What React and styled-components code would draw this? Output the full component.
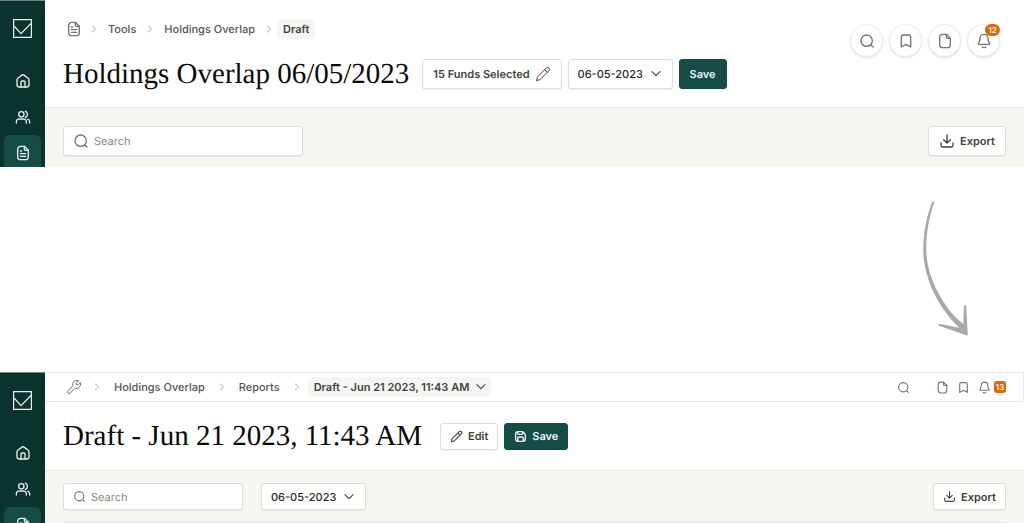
import React from "react"
import styled, { createGlobalStyle } from "styled-components"

const GlobalStyle = createGlobalStyle`
  * {
    box-sizing: border-box;
  }

  body {
    margin: 0;
    background-color: #fff;
    color: #44403c;
    font-family: Inter, "Liberation Sans", sans-serif;
    font-size: 11px;
    line-height: 16px;
    text-rendering: geometricPrecision;
  }

  button,
  input,
  select {
    font: inherit;
    color: inherit;
    text-rendering: inherit;
  }
`

const Screen = styled.section`
  display: grid;
  grid-template-columns: 45px 1fr;
`

const Main = styled.main`
  min-width: 0;
`

/* the rail is clipped to the height of the content beside it */
const Sidebar = styled.aside`
  contain: size;
  overflow: hidden;
  display: flex;
  flex-direction: column;
  align-items: center;
  padding-top: 18px;
  background-color: #0a332e;
  border-top: 1px solid #6c8582;
  color: #e7efed;
`

const HomeLink = styled.a`
  display: flex;
  margin-bottom: 25px;
  color: inherit;
`

const SideLink = styled.a`
  flex: none;
  display: flex;
  align-items: center;
  justify-content: center;
  width: 37px;
  height: 36px;
  border-radius: 6px;
  color: inherit;
  background-color: ${({ $active }) => ($active ? "#154c46" : "transparent")};
`

const Svg = styled.svg`
  flex: none;
  display: block;
  fill: none;
  stroke: currentColor;
  stroke-width: ${({ $weight }) => $weight || 2};
  stroke-linecap: round;
  stroke-linejoin: round;
`

const Header = styled.header`
  display: flex;
  justify-content: space-between;
  align-items: flex-start;
  padding: ${({ $compact }) => ($compact ? "20px 18px" : "19px 24px 18px 18px")};
  border-bottom: 1px solid #ecece8;
`

const NavBar = styled.div`
  display: flex;
  justify-content: space-between;
  align-items: center;
  height: 30px;
  padding: 0 17px 0 18px;
  border: 1px solid #e9e9e7;
  border-left: none;
`

const Crumbs = styled.nav`
  display: flex;
  align-items: center;
  color: #57534e;
  font-weight: 500;
`

const CrumbLink = styled.a`
  display: flex;
  color: inherit;
  text-decoration: none;
`

const CrumbIcon = styled(CrumbLink)`
  margin-right: -2px;
  padding-left: 3px;
  color: #78716c;
`

const Separator = styled.span`
  display: flex;
  padding: 0 ${({ $wide }) => ($wide ? "11px" : "8px")};
  color: #d0cecb;
`

const CrumbCurrent = styled.span`
  margin-left: -6px;
  padding: 2px 6px;
  border-radius: 4px;
  background-color: #f5f5f4;
  color: #44403c;
  font-weight: 600;
`

const TitleRow = styled.div`
  display: flex;
  align-items: center;
  margin-top: ${({ $compact }) => ($compact ? "0" : "20px")};
`

const Title = styled.h1`
  margin: 0 ${({ $compact }) => ($compact ? "18px" : "13px")} 0 0;
  color: #0c0a09;
  font-family: "Liberation Serif", serif;
  font-size: 29px;
  font-weight: 400;
  line-height: 28px;
  white-space: nowrap;
`

const ButtonRow = styled.div`
  display: flex;
  gap: 6px;
`

const Button = styled.button`
  display: flex;
  align-items: center;
  gap: 5px;
  height: ${({ $compact }) => ($compact ? "27px" : "30px")};
  padding: 0 ${({ $compact }) => ($compact ? "9px" : "10px")};
  border: 1px solid ${({ $primary }) => ($primary ? "#154c46" : "#dedcda")};
  border-radius: 3px;
  background-color: ${({ $primary }) => ($primary ? "#154c46" : "#fff")};
  color: ${({ $primary }) => ($primary ? "#edf5f3" : "#44403c")};
  box-shadow: 0 1px 1px rgba(28, 25, 23, 0.06);
  font-weight: 600;
  white-space: nowrap;
`

const SelectWrapper = styled.div`
  position: relative;
  display: flex;
  color: #57534e;

  svg {
    position: absolute;
    right: ${({ $chip }) => ($chip ? "3px" : "10px")};
    top: 50%;
    transform: translateY(-50%);
    pointer-events: none;
  }
`

const DateSelect = styled.select`
  appearance: none;
  height: ${({ $compact }) => ($compact ? "27px" : "30px")};
  padding: 0 28px 0 9px;
  border: 1px solid #dedcda;
  border-radius: 3px;
  background-color: #fff;
  color: #292524;
  box-shadow: 0 1px 1px rgba(28, 25, 23, 0.06);
  font-weight: 500;
`

const CrumbSelect = styled.select`
  appearance: none;
  height: 20px;
  margin-left: -6px;
  padding: 0 21px 0 6px;
  border: none;
  border-radius: 4px;
  background-color: #f5f5f4;
  color: #44403c;
  font-weight: 600;
`

const Actions = styled.div`
  display: flex;
  gap: 6px;
  padding-top: 5px;
`

const RoundButton = styled.button`
  position: relative;
  display: flex;
  align-items: center;
  justify-content: center;
  width: 33px;
  height: 33px;
  padding: 0;
  border: 1px solid #efeeed;
  border-radius: 50%;
  background-color: #fff;
  color: #78716c;
  box-shadow: 0 1px 2px rgba(28, 25, 23, 0.14);
`

const CountBadge = styled.span`
  position: absolute;
  top: -1px;
  right: -1px;
  min-width: 15px;
  border-radius: 6px;
  background-color: #d96a0b;
  color: #fff;
  font-size: 8px;
  font-weight: 500;
  line-height: 12px;
  text-align: center;
`

const FlatActions = styled.div`
  display: flex;
  align-items: center;
  gap: 8px;
`

const FlatButton = styled.button`
  display: flex;
  align-items: center;
  gap: 3px;
  padding: 0;
  border: none;
  background: none;
  color: #78716c;
  margin-right: ${({ $spaced }) => ($spaced ? "18px" : "0")};
`

const CountTag = styled.span`
  min-width: 12px;
  border-radius: 3px;
  background-color: #d96a0b;
  color: #fff;
  font-size: 8px;
  font-weight: 500;
  line-height: 12px;
  text-align: center;
`

const Toolbar = styled.div`
  display: flex;
  justify-content: space-between;
  align-items: center;
  padding: ${({ $compact }) => ($compact ? "12px 18px" : "18px 18px 11px")};
  background-color: #f5f6f0;
`

const Filters = styled.div`
  display: flex;
  gap: 18px;
`

const SearchBox = styled.label`
  display: flex;
  align-items: center;
  gap: 5px;
  width: ${({ $compact }) => ($compact ? "180px" : "240px")};
  height: ${({ $compact }) => ($compact ? "27px" : "30px")};
  padding: 0 9px;
  border: 1px solid #dedcda;
  border-radius: 3px;
  background-color: #fff;
  color: #78716c;
  box-shadow: 0 1px 1px rgba(28, 25, 23, 0.06);
`

const SearchInput = styled.input`
  flex: 1;
  min-width: 0;
  padding: 0;
  border: none;
  outline: none;
  background: none;

  &::placeholder {
    color: #8a8580;
    opacity: 1;
  }
`

const TableEdge = styled.div`
  height: 1px;
  background-color: #e4e4e0;
  border-left: 18px solid #f5f6f0;
  border-right: 18px solid #f5f6f0;
`

const Transition = styled.div`
  display: flex;
  justify-content: flex-end;
  padding: 34px 56px 35px 0;
`

const paths = {
  home: [
    "M9 21v-7.4c0-.9.7-1.6 1.6-1.6h2.8c.9 0 1.6.7 1.6 1.6V21",
    "M11 2.8 4.2 8C3.4 8.7 3 9.4 3 10.4v7.4C3 20 4 21 6.2 21h11.6c2.2 0 3.2-1 3.2-3.2v-7.4c0-1-.4-1.7-1.2-2.4L13 2.8c-.7-.5-1.3-.5-2 0Z",
  ],
  users: [
    "M22 21v-2c0-1.9-1.3-3.4-3-3.9M15.5 3.3a5 5 0 0 1 0 9.3M17 21c0-1.9 0-2.8-.3-3.5a4 4 0 0 0-2.2-2.2C13.8 15 12.9 15 11 15H8c-1.9 0-2.8 0-3.5.3a4 4 0 0 0-2.2 2.2C2 18.2 2 19.1 2 21M13.5 8a4 4 0 1 1-8 0 4 4 0 0 1 8 0Z",
  ],
  report: [
    "M14 2.3v4.1c0 .9.7 1.6 1.6 1.6h4.1M16 13H8M16 17H8M10 9H8",
    "M14 2H8.8C5.3 2 4 3.3 4 6.8v10.4C4 20.7 5.3 22 8.8 22h6.4c3.5 0 4.8-1.3 4.8-4.8V8Z",
  ],
  file: [
    "M14 2.3v4.1c0 .9.7 1.6 1.6 1.6h4.1",
    "M14 2H8.8C5.3 2 4 3.3 4 6.8v10.4C4 20.7 5.3 22 8.8 22h6.4c3.5 0 4.8-1.3 4.8-4.8V8Z",
  ],
  bookmark: ["M5 5.5C5 4 5.8 3 7.5 3h9C18.2 3 19 4 19 5.5V21l-7-4-7 4Z"],
  search: ["m21 21-3.5-3.5M20 11.5a8.5 8.5 0 1 1-17 0 8.5 8.5 0 0 1 17 0Z"],
  bell: [
    "M9.4 21c.7.6 1.6 1 2.6 1s1.9-.4 2.6-1",
    "M18 8A6 6 0 1 0 6 8c0 3.1-.8 5.2-1.7 6.6-.7 1.2-1.1 1.7-1 2 .1.3.6.4 1.6.4h14.2c1 0 1.5-.1 1.6-.4.1-.3-.3-.8-1-2C18.8 13.2 18 11.1 18 8Z",
  ],
  download: [
    "M21 15v1.2c0 1.7 0 2.5-.3 3.2a3 3 0 0 1-1.3 1.3c-.7.3-1.5.3-3.2.3H7.8c-1.7 0-2.5 0-3.2-.3a3 3 0 0 1-1.3-1.3C3 18.7 3 17.9 3 16.2V15M17 10l-5 5-5-5M12 15V3",
  ],
  pencil: [
    "m2.5 21.5.9-4.3c.1-.6.3-.9.6-1.2L17 3a2.8 2.8 0 0 1 4 4L8 20c-.3.3-.6.5-1.2.6ZM14.5 5.5l4 4",
  ],
  chevronRight: ["m9 18 6-6-6-6"],
  chevronDown: ["m5 8 7 7 7-7"],
  wrench: [
    "M15.6 8.4a2 2 0 0 1 0-2.8l3-3A6.5 6.5 0 0 0 9.9 10c.1.4 0 .8-.3 1.1L3 17.6A2.4 2.4 0 0 0 6.4 21l6.5-6.6c.3-.3.7-.4 1.1-.3a6.5 6.5 0 0 0 7.4-8.7l-3 3a2 2 0 0 1-2.8 0Z",
  ],
  save: [
    "M7 3v3.4C7 7.3 7.7 8 8.6 8h5.8c.9 0 1.6-.7 1.6-1.6V4M17 21v-6.4c0-.9-.7-1.6-1.6-1.6H8.6c-.9 0-1.6.7-1.6 1.6V21",
    "M21 9.3v6.9c0 3.4-1.4 4.8-4.8 4.8H7.8C4.4 21 3 19.6 3 16.2V7.8C3 4.4 4.4 3 7.8 3h6.9c1 0 1.7.3 2.4 1l2.9 2.9c.7.7 1 1.4 1 2.4Z",
  ],
}

const Icon = ({ name, size = 16, weight }) => (
  <Svg width={size} height={size} viewBox="0 0 24 24" $weight={weight} aria-hidden="true">
    {paths[name].map(d => (
      <path key={d} d={d} />
    ))}
  </Svg>
)

const Logo = () => (
  <svg width="19" height="19" viewBox="0 0 19 19" fill="none" stroke="currentColor" strokeWidth="1.2">
    <path d="M.6.6h17.8v17.8H.6ZM.6 6.5l7.4 8.2L18.4 4" />
  </svg>
)

const Rail = () => (
  <Sidebar>
    <HomeLink href="#" aria-label="Dashboard">
      <Logo />
    </HomeLink>
    <SideLink href="#home" aria-label="Home">
      <Icon name="home" />
    </SideLink>
    <SideLink href="#clients" aria-label="Clients">
      <Icon name="users" />
    </SideLink>
    <SideLink href="#reports" aria-label="Reports" $active>
      <Icon name="report" />
    </SideLink>
  </Sidebar>
)

const Divider = ({ wide }) => (
  <Separator $wide={wide}>
    <Icon name="chevronRight" size={12} weight={2.5} />
  </Separator>
)

const DatePicker = ({ compact }) => (
  <SelectWrapper>
    <DateSelect $compact={compact} aria-label="Date" defaultValue="06-05-2023">
      <option>06-05-2023</option>
    </DateSelect>
    <Icon name="chevronDown" size={14} />
  </SelectWrapper>
)

const Search = ({ compact }) => (
  <SearchBox $compact={compact}>
    <Icon name="search" size={compact ? 13 : 16} />
    <SearchInput type="text" placeholder="Search" aria-label="Search" />
  </SearchBox>
)

const OverlapScreen = () => (
  <Screen>
    <Rail />
    <Main>
      <Header>
        <div>
          <Crumbs aria-label="Breadcrumb">
            <CrumbIcon href="#reports" aria-label="Reports">
              <Icon name="report" />
            </CrumbIcon>
            <Divider />
            <CrumbLink href="#tools">Tools</CrumbLink>
            <Divider />
            <CrumbLink href="#overlap">Holdings Overlap</CrumbLink>
            <Divider />
            <CrumbCurrent>Draft</CrumbCurrent>
          </Crumbs>
          <TitleRow>
            <Title>Holdings Overlap 06/05/2023</Title>
            <ButtonRow>
              <Button>
                15 Funds Selected
                <Icon name="pencil" weight={1.5} />
              </Button>
              <DatePicker />
              <Button $primary>Save</Button>
            </ButtonRow>
          </TitleRow>
        </div>
        <Actions>
          <RoundButton aria-label="Search">
            <Icon name="search" />
          </RoundButton>
          <RoundButton aria-label="Bookmarks">
            <Icon name="bookmark" />
          </RoundButton>
          <RoundButton aria-label="Files">
            <Icon name="file" />
          </RoundButton>
          <RoundButton aria-label="Notifications">
            <Icon name="bell" />
            <CountBadge>12</CountBadge>
          </RoundButton>
        </Actions>
      </Header>
      <Toolbar>
        <Search />
        <Button>
          <Icon name="download" />
          Export
        </Button>
      </Toolbar>
    </Main>
  </Screen>
)

const DraftScreen = () => (
  <Screen>
    <Rail />
    <Main>
      <NavBar>
        <Crumbs aria-label="Breadcrumb">
          <CrumbIcon href="#tools" aria-label="Tools">
            <Icon name="wrench" weight={1.5} />
          </CrumbIcon>
          <Divider wide />
          <CrumbLink href="#overlap">Holdings Overlap</CrumbLink>
          <Divider wide />
          <CrumbLink href="#reports">Reports</CrumbLink>
          <Divider wide />
          <SelectWrapper $chip>
            <CrumbSelect aria-label="Draft">
              <option>Draft - Jun 21 2023, 11:43 AM</option>
            </CrumbSelect>
            <Icon name="chevronDown" size={14} />
          </SelectWrapper>
        </Crumbs>
        <FlatActions>
          <FlatButton aria-label="Search" $spaced>
            <Icon name="search" size={13} />
          </FlatButton>
          <FlatButton aria-label="Files">
            <Icon name="file" size={13} />
          </FlatButton>
          <FlatButton aria-label="Bookmarks">
            <Icon name="bookmark" size={13} />
          </FlatButton>
          <FlatButton aria-label="Notifications">
            <Icon name="bell" size={13} />
            <CountTag>13</CountTag>
          </FlatButton>
        </FlatActions>
      </NavBar>
      <Header $compact>
        <TitleRow $compact>
          <Title $compact>Draft - Jun 21 2023, 11:43 AM</Title>
          <ButtonRow>
            <Button $compact>
              <Icon name="pencil" size={13} />
              Edit
            </Button>
            <Button $compact $primary>
              <Icon name="save" size={13} weight={2.5} />
              Save
            </Button>
          </ButtonRow>
        </TitleRow>
      </Header>
      <Toolbar $compact>
        <Filters>
          <Search compact />
          <DatePicker compact />
        </Filters>
        <Button $compact>
          <Icon name="download" size={13} />
          Export
        </Button>
      </Toolbar>
      <TableEdge />
    </Main>
  </Screen>
)

const App = () => (
  <>
    <GlobalStyle />
    <OverlapScreen />
    <Transition>
      <svg width="46" height="136" viewBox="0 0 46 136" fill="#a8a8a8" aria-hidden="true">
        <path d="M10.3.5C4 17 1.3 33 1.3 49 1.300 68 8 88 20.700 107.300 26 115 31 121 37.300 126.700L17 122.800 16.300 124.500 45.800 134.800 44.200 104.300H42L41.300 123C35 118 30 113 25 106 13 89 4.500 69 4.300 49 4.200 33 6.500 17 12.300 1.200Z" />
      </svg>
    </Transition>
    <DraftScreen />
  </>
)

export default App
